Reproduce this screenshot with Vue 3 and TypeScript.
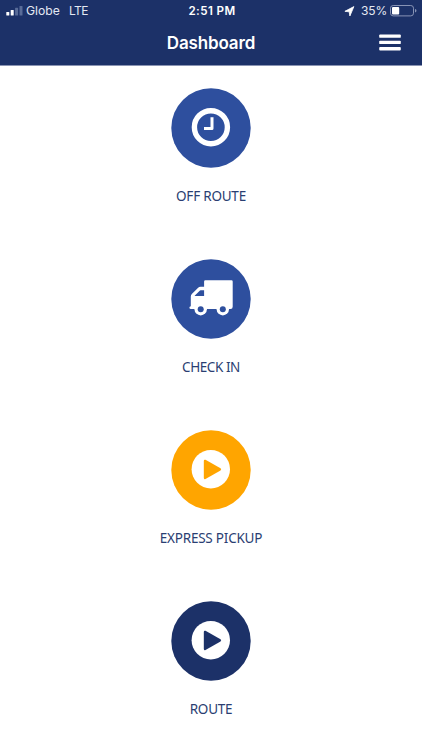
<script setup lang="ts">
interface Action {
  label: string
  icon: 'clock' | 'truck' | 'play'
  tone: 'blue' | 'orange' | 'navy'
  tight?: boolean
}

const actions: Action[] = [
  { label: 'OFF ROUTE', icon: 'clock', tone: 'blue' },
  { label: 'CHECK IN', icon: 'truck', tone: 'blue', tight: true },
  { label: 'EXPRESS PICKUP', icon: 'play', tone: 'orange' },
  { label: 'ROUTE', icon: 'play', tone: 'navy' },
]
</script>

<template>
  <div class="screen">
    <header class="header">
      <div class="status">
        <div class="side">
          <svg class="signal" width="17" height="10" viewBox="0 0 17 10">
            <rect x="0.3" y="6" width="3" height="3.6" rx="0.6" fill="#fff" />
            <rect x="4.7" y="4" width="3" height="5.6" rx="0.6" fill="#fff" />
            <rect x="9.1" y="1.8" width="3" height="7.8" rx="0.6" fill="#596c98" />
            <rect x="13.5" y="0" width="3" height="9.6" rx="0.6" fill="#596c98" />
          </svg>
          <span class="carrier">Globe</span>
          <span class="network">LTE</span>
        </div>
        <span class="time">2:51 PM</span>
        <div class="side right">
          <svg class="location" width="11" height="11" viewBox="0 0 11 11">
            <path d="M9.9 0.6 L5.9 10 L5.2 5.8 L0.9 5.3 Z" fill="#fff" stroke="#fff" stroke-width="0.8" stroke-linejoin="round" />
          </svg>
          <span class="percent">35%</span>
          <svg class="battery" width="27" height="12" viewBox="0 0 27 12">
            <rect x="0.5" y="0.5" width="23" height="10.4" rx="2.7" fill="none" stroke="#8793b5" />
            <rect x="2" y="2" width="7.2" height="7.4" rx="1" fill="#fff" />
            <path d="M25 4 Q26.5 4.4 26.5 5.7 Q26.5 7 25 7.4 Z" fill="#8793b5" />
          </svg>
        </div>
      </div>
      <div class="nav">
        <h1 class="title">Dashboard</h1>
        <button class="menu" aria-label="Menu">
          <svg width="22" height="17" viewBox="0 0 22 17">
            <rect x="0.2" y="0.4" width="21.6" height="3.4" rx="0.9" fill="#fff" />
            <rect x="0.2" y="6.7" width="21.6" height="3.4" rx="0.9" fill="#fff" />
            <rect x="0.2" y="13" width="21.6" height="3.4" rx="0.9" fill="#fff" />
          </svg>
        </button>
      </div>
    </header>

    <main class="actions">
      <section v-for="a in actions" :key="a.label" class="action" :class="a.tone">
        <svg class="badge" width="80" height="80" viewBox="0 0 80 80">
          <circle class="disc" cx="40" cy="40" r="39.7" />
          <g v-if="a.icon === 'clock'">
            <circle cx="39.9" cy="39.2" r="16.5" fill="none" stroke="#fff" stroke-width="5.4" />
            <path d="M41 29.3 V40.6 H33" fill="none" stroke="#fff" stroke-width="3" stroke-linejoin="round" />
          </g>
          <g v-else-if="a.icon === 'truck'">
            <path
              fill="#fff"
              fill-rule="evenodd"
              d="M34.3 21.2 H60.5 Q61.7 21.2 61.7 22.4 V47.8 Q61.7 50 59.5 50 H20 Q18.4 50 18.4 48.4 Q18.4 47.4 19.8 47.2 V37.5 Q19.8 36 20.8 35 L26.9 28.9 Q28 27.7 29.6 27.7 H33.1 V22.4 Q33.1 21.2 34.3 21.2 Z M23.6 37.1 H33.1 V31.3 H29.7 Q29.3 31.3 29 31.6 L23.9 36.6 Z"
            />
            <circle cx="29.7" cy="50.2" r="6.2" fill="#fff" />
            <circle cx="51.8" cy="50.2" r="6.2" fill="#fff" />
            <circle class="disc" cx="29.7" cy="50.2" r="3" />
            <circle class="disc" cx="51.8" cy="50.2" r="3" />
          </g>
          <g v-else>
            <circle cx="39.8" cy="39.2" r="19.2" fill="#fff" />
            <path
              class="disc"
              d="M32.8 31 Q32.8 29.2 34.5 29.8 L49.5 38.2 Q50.9 39.3 49.5 40.4 L34.5 48.9 Q32.8 49.7 32.8 47.8 Z"
            />
          </g>
        </svg>
        <span class="label" :class="{ tight: a.tight }">{{ a.label }}</span>
      </section>
    </main>
  </div>
</template>

<style>
body {
  margin: 0;
  background: #fff;
}
</style>

<style scoped>
.screen {
  height: 750px;
  overflow: hidden;
  background: #fff;
  font-family: Inter, sans-serif;
}
.header {
  height: 66px;
  box-sizing: border-box;
  background: #1c3168;
  border-bottom: 1px solid #8a94b3;
  color: #fff;
}
.status {
  height: 22px;
  display: grid;
  grid-template-columns: 1fr auto 1fr;
  align-items: center;
  padding: 0 5px 0 6px;
  font-size: 12px;
  line-height: 22px;
}
.side {
  display: flex;
  align-items: center;
  color: #e4e8f2;
}
.right {
  justify-content: flex-end;
}
.carrier {
  margin-left: 3px;
  font-size: 12.2px;
}
.network {
  margin-left: 9px;
  letter-spacing: -0.5px;
}
.time {
  padding-left: 1px;
  font-weight: 600;
  font-size: 11.6px;
  letter-spacing: 0.4px;
}
.percent {
  margin: 0 3px 0 6px;
  letter-spacing: -0.2px;
}
.nav {
  height: 42px;
  display: grid;
  grid-template-columns: 1fr auto 1fr;
  align-items: center;
}
.title {
  grid-column: 2;
  margin: 0;
  font-size: 17px;
  font-weight: 600;
  line-height: 22px;
  letter-spacing: -0.15px;
}
.menu {
  justify-self: end;
  display: flex;
  margin: 0 21px 1px 0;
  padding: 0;
  border: 0;
  background: none;
}
.actions {
  padding-top: 22px;
}
.action {
  height: 171px;
  display: flex;
  flex-direction: column;
  align-items: center;
}
.badge {
  flex: none;
}
.blue .disc {
  fill: #2e4f9e;
}
.orange .disc {
  fill: #ffa500;
}
.navy .disc {
  fill: #1c3168;
}
.label {
  margin-top: 18px;
  font-family: "Noto Sans", sans-serif;
  font-size: 13.5px;
  line-height: 20px;
  letter-spacing: -0.22px;
  color: #2a3e72;
  white-space: nowrap;
}
.label.tight {
  letter-spacing: -0.42px;
}
</style>
